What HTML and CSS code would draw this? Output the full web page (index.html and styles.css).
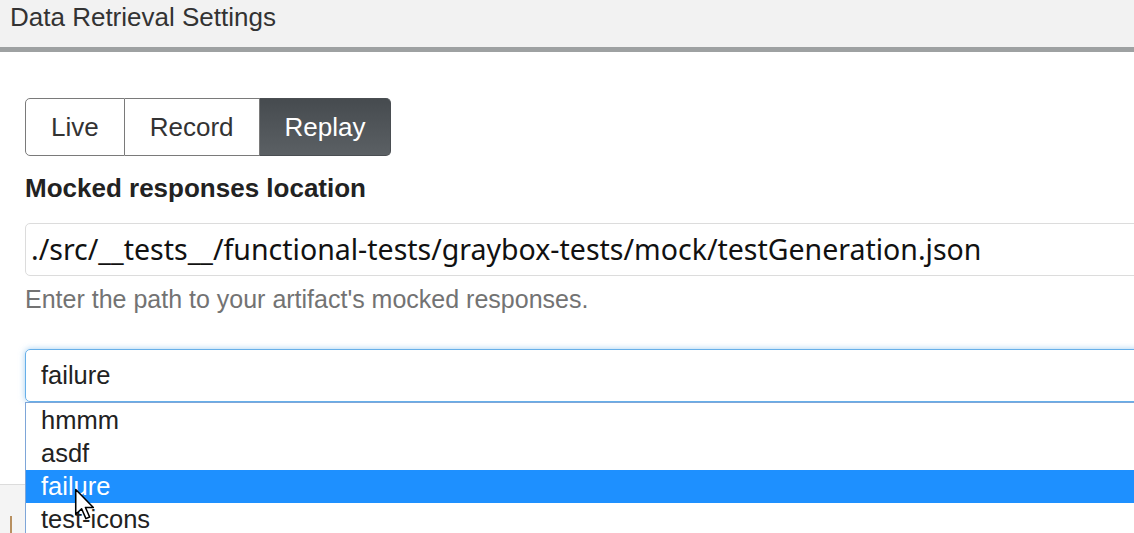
FILE: index.html
```html
<!DOCTYPE html>
<html>
<head>
<meta charset="utf-8">
<link rel="stylesheet" href="styles.css">
</head>
<body>
<div class="page">
  <div class="header">Data Retrieval Settings</div>
  <div class="content">
    <div class="btn-group">
      <button class="btn">Live</button>
      <button class="btn">Record</button>
      <button class="btn active">Replay</button>
    </div>
    <div class="label">Mocked responses location</div>
    <div class="path-input">./src/__tests__/functional-tests/graybox-tests/mock/testGeneration.json</div>
    <div class="help">Enter the path to your artifact's mocked responses.</div>
    <div class="combo">
      <div class="combo-input">failure</div>
      <ul class="dropdown">
        <li>hmmm</li>
        <li>asdf</li>
        <li class="selected">failure</li>
        <li>test-icons</li>
      </ul>
      <svg class="cursor" width="22" height="34" viewBox="0 0 14 22">
        <path d="M1 1 L1 17 L4.8 13.4 L7.6 19.8 L10 18.8 L7.3 12.6 L12.4 12.6 Z" fill="#fff" stroke="#000" stroke-width="1" stroke-linejoin="round"/>
      </svg>
    </div>
  </div>
  <div class="below">
    <span class="caret"></span>
  </div>
</div>
</body>
</html>
```
FILE: styles.css
```css
html, body {
  margin: 0;
  padding: 0;
  background: #fff;
  overflow: hidden;
}
.page {
  width: 1134px;
  height: 533px;
  overflow: hidden;
  font-family: "Liberation Sans", Arial, sans-serif;
  color: #333;
}
.header {
  height: 52px;
  box-sizing: border-box;
  background: #f2f2f2;
  padding: 0 0 0 10px;
  font-size: 26px;
  line-height: 34px;
  color: #333;
  border-bottom: 5px solid #9ea1a2;
}
.content {
  padding: 46px 0 0 25px;
}
.btn-group {
  display: inline-flex;
  height: 58px;
  border-radius: 5px;
}
.btn {
  font-family: "Liberation Sans", Arial, sans-serif;
  font-size: 26px;
  color: #333;
  background: #fff;
  border: 1.5px solid #7a7a7a;
  margin: 0;
  padding: 0 25px;
  height: 58px;
}
.btn + .btn {
  border-left: none;
}
.btn:first-child {
  border-radius: 5px 0 0 5px;
}
.btn:last-child {
  border-radius: 0 5px 5px 0;
}
.btn.active {
  color: #fff;
  background: linear-gradient(#464b4f, #5b6064);
  border-color: #4a4e52;
  padding: 0 25px;
}
.label {
  margin-top: 17px;
  font-size: 26px;
  font-weight: bold;
  line-height: 30px;
  color: #222;
}
.path-input {
  margin-top: 20px;
  height: 53px;
  box-sizing: border-box;
  width: 1160px;
  border: 1.5px solid #dcdcdc;
  border-radius: 5px;
  padding: 0 0 0 5px;
  font-family: "Noto Sans", "Open Sans", sans-serif;
  font-size: 28.5px;
  line-height: 50px;
  color: #111;
  white-space: nowrap;
}
.help {
  margin-top: 8px;
  font-size: 25px;
  line-height: 30px;
  color: #737373;
}
.combo {
  position: relative;
  margin-top: 35px;
  width: 1160px;
}
.combo-input {
  height: 53px;
  box-sizing: border-box;
  border: 1.5px solid #66afe9;
  border-radius: 5px;
  box-shadow: 0 0 6px rgba(102, 175, 233, 0.6);
  padding-left: 15px;
  font-size: 25.5px;
  line-height: 50px;
  color: #222;
}
.dropdown {
  position: absolute;
  top: 53px;
  left: 0;
  right: 0;
  margin: 0;
  padding: 1px 0 0;
  list-style: none;
  background: #fff;
  border: 1.5px solid #7ea6d8;
  border-bottom: none;
  height: 140px;
  z-index: 2;
}
.dropdown li {
  height: 33px;
  line-height: 33px;
  padding-left: 15px;
  font-size: 25.5px;
  color: #222;
}
.dropdown li.selected {
  background: #1e90ff;
  color: #fff;
}
.cursor {
  position: absolute;
  left: 49px;
  top: 139px;
  z-index: 3;
}
.below {
  margin-top: 82px;
  height: 60px;
  border-top: 1px solid #dcdcdc;
  background: #f4f4f4;
  position: relative;
}
.caret {
  display: block;
  width: 2px;
  height: 18px;
  margin: 31px 0 0 10px;
  background: #b89060;
}
```
